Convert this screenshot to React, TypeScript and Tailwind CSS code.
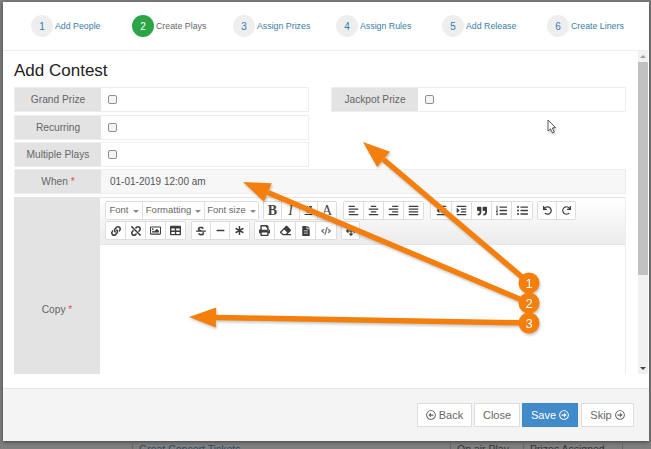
import React from "react";
import {
  FaUnderline, FaAlignLeft, FaAlignCenter, FaAlignRight, FaAlignJustify,
  FaOutdent, FaIndent, FaQuoteRight, FaListOl, FaListUl, FaUndo, FaRedo, FaLink, FaUnlink, FaRegImage,
  FaTable, FaStrikethrough, FaMinus, FaAsterisk, FaPrint, FaEraser, FaFileAlt, FaCode, FaArrowsAlt,
  FaRegArrowAltCircleLeft, FaRegArrowAltCircleRight,
} from "react-icons/fa";

const steps = [
  { n: 1, t: "Add People", w: "w-[101px]" },
  { n: 2, t: "Create Plays", w: "w-[101px]", active: true },
  { n: 3, t: "Assign Prizes", w: "w-[103px]" },
  { n: 4, t: "Assign Rules", w: "w-[106px]" },
  { n: 5, t: "Add Release", w: "w-[105px]" },
  { n: 6, t: "Create Liners", w: "w-[80px]" },
];

function Step({ n, t, w, active }: { n: number; t: string; w: string; active?: boolean }) {
  return (
    <div className={`${w} flex items-start gap-[2px]`}>
      <div className={`w-[22px] h-[22px] rounded-full flex items-center justify-center text-[10px] ${active ? "bg-[#2ba545] text-white" : "bg-[#eeeeee] text-[#337ab7]"}`}>{n}</div>
      <div className={`mt-[3px] text-[8.8px] leading-[16px] ${active ? "text-[#666666]" : "text-[#3a7ea8]"}`}>{t}</div>
    </div>
  );
}

function Check() {
  return <span className="block w-[9px] h-[9px] rounded-[2px] border border-[#8f8f8f] bg-[#f4f4f4]" />;
}

function CheckRow({ label, className = "" }: { label: string; className?: string }) {
  return (
    <div className={`flex h-[25px] w-[295px] border border-[#eeeeee] ${className}`}>
      <div className="w-[86px] bg-[#e3e3e3] flex items-center justify-center text-[10.2px] text-[#666666]">{label}</div>
      <div className="flex-1 flex items-center pl-[7px] bg-white"><Check /></div>
    </div>
  );
}

function Btn({ w, children }: { w: string; children?: React.ReactNode }) {
  return (
    <div className={`${w} h-full bg-white border-r border-[#dddddd] last:border-r-0 flex items-center justify-center text-[#3d3d3d]`}>{children}</div>
  );
}

function Group({ children, className = "" }: { children: React.ReactNode; className?: string }) {
  return <div className={`flex border border-[#dddddd] rounded-[2px] bg-white h-[19px] ${className}`}>{children}</div>;
}

function Drop({ label, w }: { label: string; w: string }) {
  return (
    <Btn w={w}>
      <span className="text-[9.5px] text-[#666666]">{label}</span>
      <span className="ml-[4px] mt-[1px] w-0 h-0 border-l-[3px] border-r-[3px] border-t-[3px] border-l-transparent border-r-transparent border-t-[#888888]" />
    </Btn>
  );
}

function Letter({ c, className = "" }: { c: string; className?: string }) {
  return <span className={`text-[14px] leading-none text-[#444444] [font-family:'Liberation_Serif',serif] ${className}`}>{c}</span>;
}

function Arrow({ x1, y1, x2, y2, n }: { x1: number; y1: number; x2: number; y2: number; n: number }) {
  const a = Math.atan2(y2 - y1, x2 - x1);
  const L = 27, W = 10;
  const bx = x2 - L * Math.cos(a), by = y2 - L * Math.sin(a);
  const px = -Math.sin(a) * W, py = Math.cos(a) * W;
  return (
    <g>
      <line x1={x1} y1={y1} x2={bx} y2={by} stroke="#f57f0d" strokeWidth={5.5} />
      <polygon points={`${x2},${y2} ${bx + px},${by + py} ${bx - px},${by - py}`} fill="#f57f0d" />
      <circle cx={x1} cy={y1} r={10.5} fill="#f57f0d" />
      <text x={x1} y={y1 + 4.5} textAnchor="middle" fontSize={13} fill="#ffffff" fontFamily="'Liberation Sans', sans-serif">{n}</text>
    </g>
  );
}

export default function App() {
  return (
    <div className="relative w-[651px] h-[449px] overflow-hidden bg-[#7f7f7f] [font-family:'Liberation_Sans',Arial,sans-serif]">
      <div className="pt-[2px] pl-[3px]">
        <div className="w-[646px] h-[439px] bg-white flex flex-col shadow-[0_1px_4px_rgba(0,0,0,0.5)]">
          {/* steps */}
          <div className="h-[49px] shrink-0 border-b border-[#eeeeee] flex pl-[28px] pt-[13px]">
            {steps.map((s) => <Step key={s.n} {...s} />)}
          </div>
          {/* body */}
          <div className="h-[337px] shrink-0 bg-white">
            <div className="h-[323px] flex overflow-hidden">
              <div className="w-[635px] pl-[11px] overflow-hidden">
                <div className="text-[17px] leading-[20px] text-[#222222] mt-[10px] mb-[6px]">Add Contest</div>
                <div className="flex">
                  <div className="w-[317px] flex flex-col">
                    <CheckRow label="Grand Prize" />
                    <CheckRow label="Recurring" className="mt-[3px]" />
                    <CheckRow label="Multiple Plays" className="mt-[2px]" />
                  </div>
                  <div>
                    <CheckRow label="Jackpot Prize" />
                  </div>
                </div>
                <div className="flex h-[25px] w-[612px] mt-[2px] border border-[#eeeeee]">
                  <div className="w-[86px] bg-[#e3e3e3] flex items-center justify-center text-[10.2px] text-[#666666]">When&nbsp;<span className="text-[#d9534f]">*</span></div>
                  <div className="flex-1 bg-[#f7f7f7] flex items-center pl-[9px] text-[10px] text-[#555555]">01-01-2019 12:00 am</div>
                </div>
                <div className="flex h-[177px] w-[612px] mt-[3px]">
                  <div className="w-[86px] bg-[#e3e3e3] flex items-start justify-center pt-[107px] text-[10.2px] leading-[12px] text-[#666666]">Copy&nbsp;<span className="text-[#d9534f]">*</span></div>
                  <div className="flex-1 border-r border-[#eeeeee] flex flex-col">
                    <div className="h-[48px] border-y border-[#e6e6e6] bg-gradient-to-b from-white to-[#ececec] pl-[5px] pt-[3px] flex flex-col gap-[1px]">
                      <div className="flex">
                        <Group className="mr-[4px]">
                          <Drop label="Font" w="w-[37px]" />
                          <Drop label="Formatting" w="w-[62px]" />
                          <Drop label="Font size" w="w-[53px]" />
                        </Group>
                        <Group className="mr-[6px]">
                          <Btn w="w-[18px]"><Letter c="B" className="font-bold" /></Btn>
                          <Btn w="w-[18px]"><Letter c="I" className="italic" /></Btn>
                          <Btn w="w-[18px]"><FaUnderline size={9} /></Btn>
                          <Btn w="w-[18px]"><Letter c="A" /></Btn>
                        </Group>
                        <Group className="mr-[6px]">
                          <Btn w="w-[20px]"><FaAlignLeft size={11} /></Btn>
                          <Btn w="w-[20px]"><FaAlignCenter size={11} /></Btn>
                          <Btn w="w-[20px]"><FaAlignRight size={11} /></Btn>
                          <Btn w="w-[19px]"><FaAlignJustify size={11} /></Btn>
                        </Group>
                        <Group className="mr-[4px]">
                          <Btn w="w-[21px]"><FaOutdent size={11} /></Btn>
                          <Btn w="w-[20px]"><FaIndent size={11} /></Btn>
                          <Btn w="w-[20px]"><FaQuoteRight size={10} /></Btn>
                          <Btn w="w-[20px]"><FaListOl size={11} /></Btn>
                          <Btn w="w-[20px]"><FaListUl size={11} /></Btn>
                        </Group>
                        <Group>
                          <Btn w="w-[19px]"><FaUndo size={9} /></Btn>
                          <Btn w="w-[18px]"><FaRedo size={9} /></Btn>
                        </Group>
                      </div>
                      <div className="flex">
                        <Group className="mr-[5px]">
                          <Btn w="w-[20px]"><FaLink size={10} /></Btn>
                          <Btn w="w-[20px]"><FaUnlink size={10} /></Btn>
                          <Btn w="w-[20px]"><FaRegImage size={11} /></Btn>
                          <Btn w="w-[19px]"><FaTable size={11} /></Btn>
                        </Group>
                        <Group className="mr-[4px]">
                          <Btn w="w-[19px]"><FaStrikethrough size={10} /></Btn>
                          <Btn w="w-[19px]"><FaMinus size={9} /></Btn>
                          <Btn w="w-[19px]"><FaAsterisk size={9} /></Btn>
                        </Group>
                        <Group className="mr-[4px]">
                          <Btn w="w-[20px]"><FaPrint size={11} /></Btn>
                          <Btn w="w-[21px]"><FaEraser size={11} /></Btn>
                          <Btn w="w-[20px]"><FaFileAlt size={10} /></Btn>
                          <Btn w="w-[20px]"><FaCode size={10} className="text-[#777777]" /></Btn>
                        </Group>
                        <Group>
                          <Btn w="w-[17px]"><FaArrowsAlt size={10} /></Btn>
                        </Group>
                      </div>
                    </div>
                    <div className="flex-1 bg-white" />
                  </div>
                </div>
              </div>
              {/* scrollbar */}
              <div className="w-[10px] h-full bg-[#f1f1f1] flex flex-col items-center">
                <div className="h-[11px] shrink-0 flex items-center justify-center">
                  <span className="w-0 h-0 border-l-[3px] border-r-[3px] border-b-[3px] border-l-transparent border-r-transparent border-b-[#a0a0a0]" />
                </div>
                <div className="w-full h-[213px] shrink-0 bg-[#c1c1c1]" />
                <div className="flex-1" />
                <div className="h-[11px] shrink-0 flex items-center justify-center">
                  <span className="w-0 h-0 border-l-[3px] border-r-[3px] border-t-[3px] border-l-transparent border-r-transparent border-t-[#444444]" />
                </div>
              </div>
            </div>
          </div>
          {/* footer */}
          <div className="flex-1 bg-[#f4f4f4] border-t border-[#e5e5e5] flex items-start justify-end pt-[14px] pr-[15px] gap-[2px] text-[11px]">
            <div className="w-[55px] h-[24px] bg-white border border-[#dddddd] flex items-center justify-center gap-[3px] text-[#666666]"><FaRegArrowAltCircleLeft size={10} />Back</div>
            <div className="w-[46px] h-[24px] bg-white border border-[#dddddd] flex items-center justify-center text-[#666666]">Close</div>
            <div className="w-[56px] h-[24px] bg-[#428bca] border border-[#3f86c4] flex items-center justify-center gap-[3px] text-white">Save<FaRegArrowAltCircleRight size={10} /></div>
            <div className="w-[53px] h-[24px] ml-[1px] bg-white border border-[#dddddd] flex items-center justify-center gap-[3px] text-[#666666]">Skip<FaRegArrowAltCircleRight size={10} /></div>
          </div>
        </div>
        {/* page behind the modal */}
        <div className="flex h-[8px] overflow-hidden text-[10.5px] leading-[12px] pt-[2px]">
          <div className="w-[129px] h-[12px]" />
          <div className="w-[318px] pl-[6px] h-[12px] border-l border-[#666666] text-[#2a4a63]">Great Concert Tickets</div>
          <div className="w-[73px] pl-[6px] h-[12px] border-l border-[#666666] text-[#333333]">On air Play</div>
          <div className="w-[99px] pl-[6px] h-[12px] border-l border-[#666666] text-[#333333]">Prizes Assigned</div>
          <div className="h-[12px] border-l border-[#666666]" />
        </div>
      </div>

      {/* annotation arrows lying over the dialog */}
      <svg className="absolute left-0 top-0 [filter:drop-shadow(1px_2px_1px_rgba(0,0,0,0.2))]" width={651} height={449}>
        <Arrow x1={529} y1={283} x2={363} y2={142} n={1} />
        <Arrow x1={529} y1={303} x2={243} y2={182} n={2} />
        <Arrow x1={529} y1={323} x2={189} y2={317} n={3} />
        <path d="M548 120 L548 131 L550.5 128.8 L552.5 133 L554.3 132 L552.3 128 L555.5 127.5 Z" fill="#ffffff" stroke="#333333" strokeWidth={0.8} />
      </svg>
    </div>
  );
}
